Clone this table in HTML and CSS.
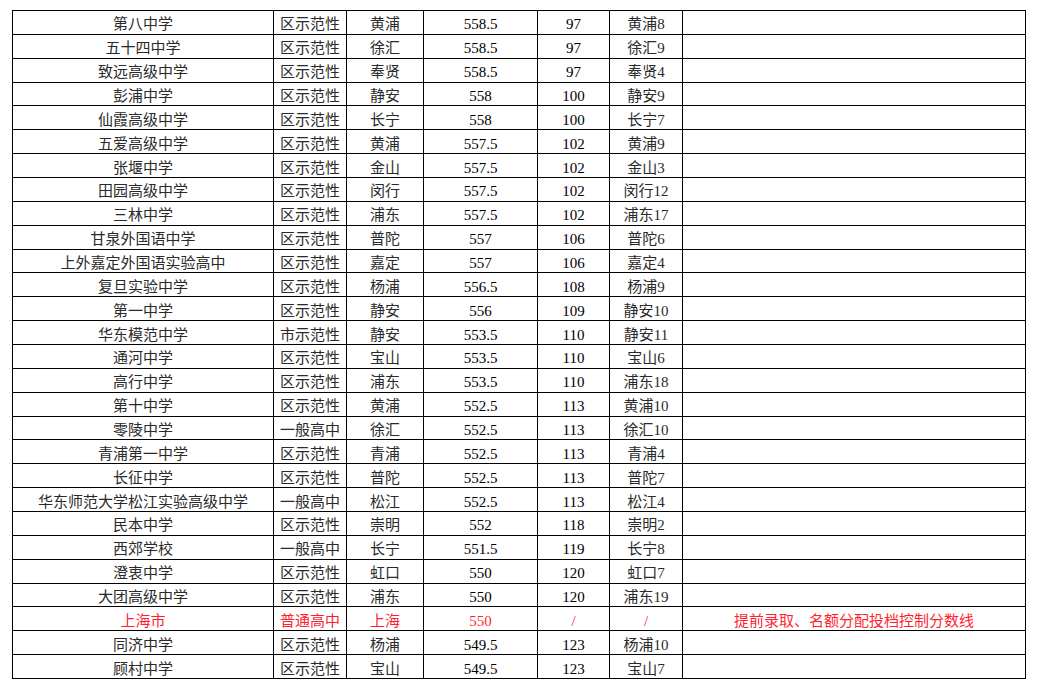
FILE: index.html
```html
<!DOCTYPE html>
<html lang="zh-CN">
<head>
<meta charset="utf-8">
<title>投档分数线</title>
<link rel="stylesheet" href="styles.css">
</head>
<body>
<table class="score-table">
  <colgroup>
    <col class="c-name"><col class="c-type"><col class="c-dist"><col class="c-score"><col class="c-rank"><col class="c-code"><col class="c-note">
  </colgroup>
  <tbody>
    <tr><td>第八中学</td><td>区示范性</td><td>黄浦</td><td class="num">558.5</td><td class="num">97</td><td>黄浦8</td><td></td></tr>
    <tr><td>五十四中学</td><td>区示范性</td><td>徐汇</td><td class="num">558.5</td><td class="num">97</td><td>徐汇9</td><td></td></tr>
    <tr><td>致远高级中学</td><td>区示范性</td><td>奉贤</td><td class="num">558.5</td><td class="num">97</td><td>奉贤4</td><td></td></tr>
    <tr><td>彭浦中学</td><td>区示范性</td><td>静安</td><td class="num">558</td><td class="num">100</td><td>静安9</td><td></td></tr>
    <tr><td>仙霞高级中学</td><td>区示范性</td><td>长宁</td><td class="num">558</td><td class="num">100</td><td>长宁7</td><td></td></tr>
    <tr><td>五爱高级中学</td><td>区示范性</td><td>黄浦</td><td class="num">557.5</td><td class="num">102</td><td>黄浦9</td><td></td></tr>
    <tr><td>张堰中学</td><td>区示范性</td><td>金山</td><td class="num">557.5</td><td class="num">102</td><td>金山3</td><td></td></tr>
    <tr><td>田园高级中学</td><td>区示范性</td><td>闵行</td><td class="num">557.5</td><td class="num">102</td><td>闵行12</td><td></td></tr>
    <tr><td>三林中学</td><td>区示范性</td><td>浦东</td><td class="num">557.5</td><td class="num">102</td><td>浦东17</td><td></td></tr>
    <tr><td>甘泉外国语中学</td><td>区示范性</td><td>普陀</td><td class="num">557</td><td class="num">106</td><td>普陀6</td><td></td></tr>
    <tr><td>上外嘉定外国语实验高中</td><td>区示范性</td><td>嘉定</td><td class="num">557</td><td class="num">106</td><td>嘉定4</td><td></td></tr>
    <tr><td>复旦实验中学</td><td>区示范性</td><td>杨浦</td><td class="num">556.5</td><td class="num">108</td><td>杨浦9</td><td></td></tr>
    <tr><td>第一中学</td><td>区示范性</td><td>静安</td><td class="num">556</td><td class="num">109</td><td>静安10</td><td></td></tr>
    <tr><td>华东模范中学</td><td>市示范性</td><td>静安</td><td class="num">553.5</td><td class="num">110</td><td>静安11</td><td></td></tr>
    <tr><td>通河中学</td><td>区示范性</td><td>宝山</td><td class="num">553.5</td><td class="num">110</td><td>宝山6</td><td></td></tr>
    <tr><td>高行中学</td><td>区示范性</td><td>浦东</td><td class="num">553.5</td><td class="num">110</td><td>浦东18</td><td></td></tr>
    <tr><td>第十中学</td><td>区示范性</td><td>黄浦</td><td class="num">552.5</td><td class="num">113</td><td>黄浦10</td><td></td></tr>
    <tr><td>零陵中学</td><td>一般高中</td><td>徐汇</td><td class="num">552.5</td><td class="num">113</td><td>徐汇10</td><td></td></tr>
    <tr><td>青浦第一中学</td><td>区示范性</td><td>青浦</td><td class="num">552.5</td><td class="num">113</td><td>青浦4</td><td></td></tr>
    <tr><td>长征中学</td><td>区示范性</td><td>普陀</td><td class="num">552.5</td><td class="num">113</td><td>普陀7</td><td></td></tr>
    <tr><td>华东师范大学松江实验高级中学</td><td>一般高中</td><td>松江</td><td class="num">552.5</td><td class="num">113</td><td>松江4</td><td></td></tr>
    <tr><td>民本中学</td><td>区示范性</td><td>崇明</td><td class="num">552</td><td class="num">118</td><td>崇明2</td><td></td></tr>
    <tr><td>西郊学校</td><td>一般高中</td><td>长宁</td><td class="num">551.5</td><td class="num">119</td><td>长宁8</td><td></td></tr>
    <tr><td>澄衷中学</td><td>区示范性</td><td>虹口</td><td class="num">550</td><td class="num">120</td><td>虹口7</td><td></td></tr>
    <tr><td>大团高级中学</td><td>区示范性</td><td>浦东</td><td class="num">550</td><td class="num">120</td><td>浦东19</td><td></td></tr>
    <tr class="highlight"><td>上海市</td><td>普通高中</td><td>上海</td><td class="num">550</td><td class="num">/</td><td class="num">/</td><td>提前录取、名额分配投档控制分数线</td></tr>
    <tr><td>同济中学</td><td>区示范性</td><td>杨浦</td><td class="num">549.5</td><td class="num">123</td><td>杨浦10</td><td></td></tr>
    <tr><td>顾村中学</td><td>区示范性</td><td>宝山</td><td class="num">549.5</td><td class="num">123</td><td>宝山7</td><td></td></tr>
  </tbody>
</table>
</body>
</html>
```

FILE: styles.css
```css
html, body {
  margin: 0;
  padding: 0;
  background: #fff;
}

body {
  padding: 10px 0 0 12px;
  font-family: "Liberation Serif", "Noto Sans CJK SC", serif;
  font-size: 15px;
  color: #2a2a2a;
}

.score-table {
  border-collapse: collapse;
  table-layout: fixed;
  width: 1013px;
}

.c-name { width: 261px; }
.c-type { width: 73px; }
.c-dist { width: 77px; }
.c-score { width: 114px; }
.c-rank { width: 72px; }
.c-code { width: 73px; }
.c-note { width: 343px; }

.score-table tr {
  height: 23.87px;
}

.score-table td {
  border: 1px solid #000;
  padding: 4px 0 0;
  text-align: center;
  vertical-align: middle;
  line-height: 18px;
  white-space: nowrap;
  overflow: hidden;
}

.score-table td.num {
  color: #000;
}

.score-table tr.highlight td {
  color: #ff1f2e;
}
```
